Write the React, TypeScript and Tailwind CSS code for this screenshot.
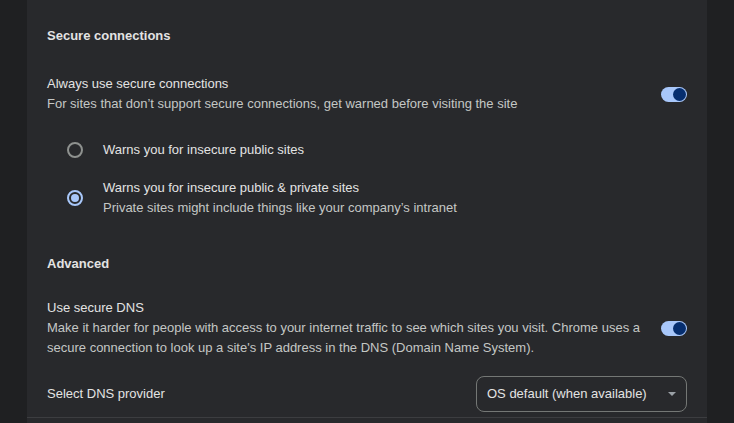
import React from 'react';

const font = { fontFamily: '"Segoe UI", "Liberation Sans", Arial, sans-serif' };

function Toggle() {
  return (
    <div className="relative w-[26px] h-[15px] rounded-full bg-[#a8c7fa] shrink-0">
      <div className="absolute right-[1px] top-[1px] w-[13px] h-[13px] rounded-full bg-[#062e6f]" />
    </div>
  );
}

function Radio({ checked }: { checked?: boolean }) {
  return checked ? (
    <div className="w-[16px] h-[16px] rounded-full border-2 border-[#a8c7fa] flex items-center justify-center shrink-0">
      <div className="w-[8px] h-[8px] rounded-full bg-[#a8c7fa]" />
    </div>
  ) : (
    <div className="w-[16px] h-[16px] rounded-full border-2 border-[#8e918f] shrink-0" />
  );
}

export default function App() {
  return (
    <div className="w-full h-[423px] overflow-hidden bg-[#1f2022] px-[27px]" style={font}>
      <div className="w-[680px] h-full bg-[#28292c] flex flex-col text-[13px] leading-[20px] text-[#e3e3e3]">
        <div className="px-[20px] pt-[26px] font-semibold">Secure connections</div>

        <div className="flex items-center px-[20px] mt-[28px]">
          <div className="flex-1">
            <div>Always use secure connections</div>
            <div className="text-[#c4c7c5]">
              For sites that don’t support secure connections, get warned before visiting the site
            </div>
          </div>
          <Toggle />
        </div>

        <div className="flex items-center pl-[40px] mt-[26px] gap-[20px]">
          <Radio />
          <div>Warns you for insecure public sites</div>
        </div>

        <div className="flex items-center pl-[40px] mt-[18px] gap-[20px]">
          <Radio checked />
          <div>
            <div>Warns you for insecure public &amp; private sites</div>
            <div className="text-[#c4c7c5]">Private sites might include things like your company’s intranet</div>
          </div>
        </div>

        <div className="px-[20px] mt-[36px] font-semibold">Advanced</div>

        <div className="flex items-center px-[20px] mt-[24px]">
          <div className="flex-1">
            <div>Use secure DNS</div>
            <div className="text-[#c4c7c5]">
              Make it harder for people with access to your internet traffic to see which sites you visit. Chrome uses a
              <br />
              secure connection to look up a site's IP address in the DNS (Domain Name System).
            </div>
          </div>
          <Toggle />
        </div>

        <div className="flex items-center justify-between px-[20px] mt-[18px] pb-[5px] border-b border-[#3c3d40]">
          <div>Select DNS provider</div>
          <div className="w-[211px] h-[36px] rounded-[8px] border border-[#747775] flex items-center justify-between pl-[10px] pr-[10px]">
            <span>OS default (when available)</span>
            <svg width="8" height="4" viewBox="0 0 8 4">
              <path d="M0 0h8L4 4z" fill="#9aa0a6" />
            </svg>
          </div>
        </div>
      </div>
    </div>
  );
}
